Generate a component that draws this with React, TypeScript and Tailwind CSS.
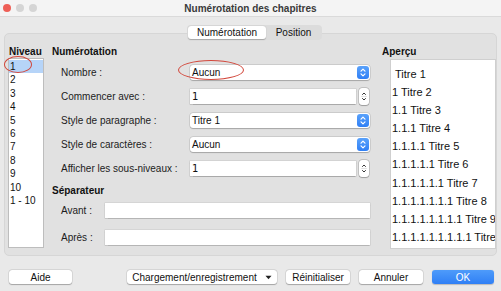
import React from 'react';

const font = { fontFamily: '"Liberation Sans", Arial, sans-serif' };

const levels = ['1', '2', '3', '4', '5', '6', '7', '8', '9', '10', '1 - 10'];

const preview = [
    ' Titre 1',
    '1 Titre 2',
    '1.1 Titre 3',
    '1.1.1 Titre 4',
    '1.1.1.1 Titre 5',
    '1.1.1.1.1 Titre 6',
    '1.1.1.1.1.1 Titre 7',
    '1.1.1.1.1.1.1 Titre 8',
    '1.1.1.1.1.1.1.1 Titre 9',
    '1.1.1.1.1.1.1.1.1 Titre 10',
];

const SelectBox: React.FC<{ value: string }> = ({ value }) => (
    <div className="w-[180px] h-[15px] bg-white rounded-[3px] shadow-[0_0_0_0.5px_rgba(0,0,0,0.15),0_0.5px_1px_rgba(0,0,0,0.2)] flex items-center justify-between pl-[2px] pr-[1px]">
        <span className="text-[10px] text-[#111]">{value}</span>
        <div className="w-[12px] h-[13px] rounded-[3px] bg-gradient-to-b from-[#5aa2fb] to-[#2f7ff5] flex items-center justify-center">
            <svg width="6" height="9" viewBox="0 0 6 9" fill="none" stroke="white" strokeWidth="1.2" strokeLinecap="round" strokeLinejoin="round">
                <path d="M1 3.2 L3 1.2 L5 3.2" />
                <path d="M1 5.8 L3 7.8 L5 5.8" />
            </svg>
        </div>
    </div>
);

const SpinBox: React.FC<{ value: string }> = ({ value }) => (
    <div className="w-[180px] flex items-center">
        <div className="w-[166px] h-[15px] bg-white shadow-[0_0_0_0.5px_rgba(0,0,0,0.12),0_0.5px_1px_rgba(0,0,0,0.2)] flex items-center pl-[2px]">
            <span className="text-[10px] text-[#111]" style={{ fontFamily: '"DejaVu Sans", sans-serif' }}>{value}</span>
        </div>
        <div className="ml-[3px] w-[10px] h-[17px] bg-white rounded-[3px] shadow-[0_0_0_0.5px_rgba(0,0,0,0.25),0_0.5px_1px_rgba(0,0,0,0.2)] flex flex-col items-center justify-center">
            <svg width="6" height="13" viewBox="0 0 6 13" fill="none" stroke="#333" strokeWidth="1" strokeLinecap="round" strokeLinejoin="round">
                <path d="M1.5 4.5 L3 3 L4.5 4.5" />
                <path d="M0.5 6.5 L5.5 6.5" stroke="#cfcfcf" strokeWidth="0.6" />
                <path d="M1.5 8.5 L3 10 L4.5 8.5" />
            </svg>
        </div>
    </div>
);

const Row: React.FC<{ label: string; children: React.ReactNode }> = ({ label, children }) => (
    <div className="h-[24px] flex items-center pl-[9px]">
        <span className="w-[129px] text-[10px] text-[#1c1c1c]">{label}</span>
        {children}
    </div>
);

const Button: React.FC<{ children: React.ReactNode; className?: string; primary?: boolean }> = ({ children, className = '', primary }) => (
    <div
        className={`h-[14px] rounded-[3px] flex items-center justify-center text-[10px] ${
            primary
                ? 'bg-gradient-to-b from-[#4e9bfa] to-[#2f7ff5] text-white shadow-[0_0.5px_1px_rgba(0,0,0,0.2)]'
                : 'bg-white text-[#111] shadow-[0_0_0_0.5px_rgba(0,0,0,0.12),0_0.5px_1px_rgba(0,0,0,0.25)]'
        } ${className}`}
    >
        {children}
    </div>
);

export default function App() {
    return (
        <div className="relative w-[501px] h-[291px] bg-[#e9e9e9] flex flex-col overflow-hidden" style={font}>
            {/* Title bar */}
            <div className="relative h-[17px] bg-[#f4f4f4] border-b border-[#dadada] flex items-center justify-center">
                <div className="absolute left-[3px] top-[4px] flex gap-[5px]">
                    <div className="w-[8px] h-[8px] rounded-full bg-[#ee5f57]" />
                    <div className="w-[8px] h-[8px] rounded-full bg-[#d5d5d5]" />
                    <div className="w-[8px] h-[8px] rounded-full bg-[#d5d5d5]" />
                </div>
                <span className="text-[10px] font-bold text-[#3a3a3a]">Numérotation des chapitres</span>
            </div>

            {/* Tabs */}
            <div className="relative z-10 mt-[8px] flex justify-center">
                <div className="ml-[8px] h-[15px] flex items-center bg-[#dcdcdc] rounded-[4px] p-[1px]">
                    <div className="w-[78px] h-[13px] bg-white rounded-[3px] shadow-[0_0.5px_1px_rgba(0,0,0,0.25)] flex items-center justify-center text-[10px] text-[#111]">
                        Numérotation
                    </div>
                    <div className="w-[55px] h-[13px] flex items-center justify-center text-[10px] text-[#111]">Position</div>
                </div>
            </div>

            {/* Panel */}
            <div className="mx-[4px] mt-[-7px] h-[223px] bg-[#e1e1e1] border border-[#d6d6d6] rounded-[5px] flex pt-[11px] pl-[3px]">
                {/* Niveau */}
                <div className="w-[36px] flex flex-col">
                    <div className="h-[13px] pl-[1px] text-[10px] font-bold text-[#111] leading-[13px]">Niveau</div>
                    <div className="h-[190px] bg-white border border-[#bdbdbd] pt-[1px]">
                        {levels.map((l, i) => (
                            <div
                                key={l}
                                className={`h-[13.4px] leading-[13.4px] pl-[1px] text-[10px] text-[#111] ${i === 0 ? 'bg-[#b6d4f8]' : ''}`}
                            >
                                {l}
                            </div>
                        ))}
                    </div>
                </div>

                {/* Numérotation */}
                <div className="ml-[8px] w-[318px] flex flex-col">
                    <div className="h-[13px] text-[10px] font-bold text-[#111] leading-[13px]">Numérotation</div>
                    <div className="mt-[2px]">
                        <Row label="Nombre :">
                            <SelectBox value="Aucun" />
                        </Row>
                        <Row label="Commencer avec :">
                            <SpinBox value="1" />
                        </Row>
                        <Row label="Style de paragraphe :">
                            <SelectBox value="Titre 1" />
                        </Row>
                        <Row label="Style de caractères :">
                            <SelectBox value="Aucun" />
                        </Row>
                        <Row label="Afficher les sous-niveaux :">
                            <SpinBox value="1" />
                        </Row>
                    </div>
                    <div className="mt-[4px] h-[13px] text-[10px] font-bold text-[#111] leading-[13px]">Séparateur</div>
                    <div className="h-[27px] flex items-center pl-[9px]">
                        <span className="w-[44px] text-[10px] text-[#1c1c1c]">Avant :</span>
                        <div className="w-[265px] h-[15px] bg-white shadow-[0_0_0_0.5px_rgba(0,0,0,0.1),0_0.5px_1px_rgba(0,0,0,0.15)]" />
                    </div>
                    <div className="h-[27px] flex items-center pl-[9px]">
                        <span className="w-[44px] text-[10px] text-[#1c1c1c]">Après :</span>
                        <div className="w-[265px] h-[15px] bg-white shadow-[0_0_0_0.5px_rgba(0,0,0,0.1),0_0.5px_1px_rgba(0,0,0,0.15)]" />
                    </div>
                </div>

                {/* Aperçu */}
                <div className="ml-[12px] flex-1 flex flex-col min-w-0">
                    <div className="h-[13px] text-[10px] font-bold text-[#111] leading-[13px]">Aperçu</div>
                    <div className="mt-[1px] ml-[8px] h-[190px] bg-white border border-[#cfcfcf] pt-[5px] overflow-hidden">
                        {preview.map((p, i) => (
                            <div
                                key={i}
                                className={`h-[18.1px] leading-[18px] whitespace-nowrap text-[11px] text-[#111] ${i === 0 ? 'pl-[4px]' : 'pl-[1px]'}`}
                            >
                                {p.trim()}
                            </div>
                        ))}
                    </div>
                </div>
            </div>

            {/* Bottom buttons */}
            <div className="mt-[14px] flex items-center pl-[9px] pr-[7px]">
                <Button className="w-[63px]">Aide</Button>
                <div className="flex-1" />
                <div className="flex gap-[9px]">
                    <Button className="w-[150px] gap-[8px]">
                        <span>Chargement/enregistrement</span>
                        <svg width="7" height="5" viewBox="0 0 7 5">
                            <path d="M0.5 0.8 L6.5 0.8 L3.5 4.2 Z" fill="#222" />
                        </svg>
                    </Button>
                    <Button className="w-[64px]">Réinitialiser</Button>
                    <Button className="w-[64px]">Annuler</Button>
                    <Button className="w-[62px]" primary>OK</Button>
                </div>
            </div>

            {/* Red annotation ellipses */}
            <div className="absolute left-[4px] top-[56px] w-[28px] h-[17px] rounded-[50%] border-[1.5px] border-[#d2473b]" />
            <div className="absolute left-[178px] top-[60px] w-[66px] h-[20px] rounded-[50%] border-[1.5px] border-[#d2473b]" />
        </div>
    );
}
